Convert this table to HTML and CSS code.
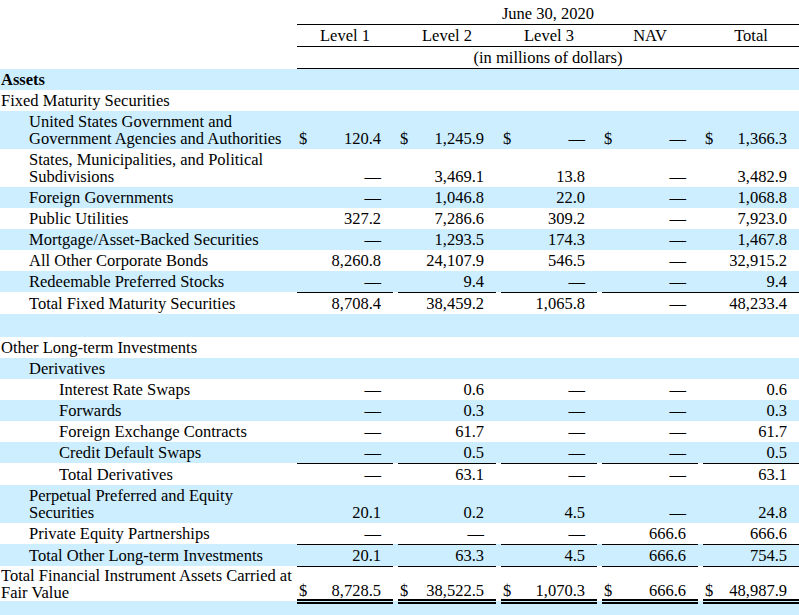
FILE: index.html
```html
<!DOCTYPE html>
<html>
<head>
<meta charset="utf-8">
<link rel="stylesheet" href="styles.css">
</head>
<body>
<table class="fv">
<colgroup>
<col class="c-lbl">
<col class="c-d"><col class="c-n">
<col class="c-g">
<col class="c-d"><col class="c-n2">
<col class="c-g">
<col class="c-d"><col class="c-n">
<col class="c-g">
<col class="c-d"><col class="c-n">
<col class="c-g">
<col class="c-d"><col class="c-n">
</colgroup>
<tr class="hdr"><td></td><td colspan="14" class="ctr u">June 30, 2020</td></tr>
<tr class="hdr"><td></td><td colspan="2" class="ctr u">Level 1</td><td class="u"></td><td colspan="2" class="ctr u">Level 2</td><td class="u"></td><td colspan="2" class="ctr u">Level 3</td><td class="u"></td><td colspan="2" class="ctr u">NAV</td><td class="u"></td><td colspan="2" class="ctr u">Total</td></tr>
<tr class="hdr"><td></td><td colspan="14" class="ctr u">(in millions of dollars)</td></tr>

<tr class="b"><td class="l0 bold">Assets</td><td colspan="14"></td></tr>
<tr><td class="l0">Fixed Maturity Securities</td><td colspan="14"></td></tr>
<tr class="b"><td class="l1">United States Government and Government Agencies and Authorities</td><td class="d">$</td><td class="n">120.4</td><td></td><td class="d">$</td><td class="n">1,245.9</td><td></td><td class="d">$</td><td class="n">—</td><td></td><td class="d">$</td><td class="n">—</td><td></td><td class="d">$</td><td class="n">1,366.3</td></tr>
<tr><td class="l1">States, Municipalities, and Political Subdivisions</td><td class="d"></td><td class="n">—</td><td></td><td class="d"></td><td class="n">3,469.1</td><td></td><td class="d"></td><td class="n">13.8</td><td></td><td class="d"></td><td class="n">—</td><td></td><td class="d"></td><td class="n">3,482.9</td></tr>
<tr class="b"><td class="l1">Foreign Governments</td><td class="d"></td><td class="n">—</td><td></td><td class="d"></td><td class="n">1,046.8</td><td></td><td class="d"></td><td class="n">22.0</td><td></td><td class="d"></td><td class="n">—</td><td></td><td class="d"></td><td class="n">1,068.8</td></tr>
<tr><td class="l1">Public Utilities</td><td class="d"></td><td class="n">327.2</td><td></td><td class="d"></td><td class="n">7,286.6</td><td></td><td class="d"></td><td class="n">309.2</td><td></td><td class="d"></td><td class="n">—</td><td></td><td class="d"></td><td class="n">7,923.0</td></tr>
<tr class="b"><td class="l1">Mortgage/Asset-Backed Securities</td><td class="d"></td><td class="n">—</td><td></td><td class="d"></td><td class="n">1,293.5</td><td></td><td class="d"></td><td class="n">174.3</td><td></td><td class="d"></td><td class="n">—</td><td></td><td class="d"></td><td class="n">1,467.8</td></tr>
<tr><td class="l1">All Other Corporate Bonds</td><td class="d"></td><td class="n">8,260.8</td><td></td><td class="d"></td><td class="n">24,107.9</td><td></td><td class="d"></td><td class="n">546.5</td><td></td><td class="d"></td><td class="n">—</td><td></td><td class="d"></td><td class="n">32,915.2</td></tr>
<tr class="b"><td class="l1">Redeemable Preferred Stocks</td><td class="d u"></td><td class="n u">—</td><td></td><td class="d u"></td><td class="n u">9.4</td><td></td><td class="d u"></td><td class="n u">—</td><td></td><td class="d u"></td><td class="n u">—</td><td class="u"></td><td class="d u"></td><td class="n u">9.4</td></tr>
<tr><td class="l1">Total Fixed Maturity Securities</td><td class="d"></td><td class="n">8,708.4</td><td></td><td class="d"></td><td class="n">38,459.2</td><td></td><td class="d"></td><td class="n">1,065.8</td><td></td><td class="d"></td><td class="n">—</td><td></td><td class="d"></td><td class="n">48,233.4</td></tr>
<tr class="b blank"><td></td><td colspan="14"></td></tr>
<tr><td class="l0">Other Long-term Investments</td><td colspan="14"></td></tr>
<tr class="b"><td class="l1">Derivatives</td><td colspan="14"></td></tr>
<tr><td class="l2">Interest Rate Swaps</td><td class="d"></td><td class="n">—</td><td></td><td class="d"></td><td class="n">0.6</td><td></td><td class="d"></td><td class="n">—</td><td></td><td class="d"></td><td class="n">—</td><td></td><td class="d"></td><td class="n">0.6</td></tr>
<tr class="b"><td class="l2">Forwards</td><td class="d"></td><td class="n">—</td><td></td><td class="d"></td><td class="n">0.3</td><td></td><td class="d"></td><td class="n">—</td><td></td><td class="d"></td><td class="n">—</td><td></td><td class="d"></td><td class="n">0.3</td></tr>
<tr><td class="l2">Foreign Exchange Contracts</td><td class="d"></td><td class="n">—</td><td></td><td class="d"></td><td class="n">61.7</td><td></td><td class="d"></td><td class="n">—</td><td></td><td class="d"></td><td class="n">—</td><td></td><td class="d"></td><td class="n">61.7</td></tr>
<tr class="b"><td class="l2">Credit Default Swaps</td><td class="d u"></td><td class="n u">—</td><td></td><td class="d u"></td><td class="n u">0.5</td><td></td><td class="d u"></td><td class="n u">—</td><td></td><td class="d u"></td><td class="n u">—</td><td></td><td class="d u"></td><td class="n u">0.5</td></tr>
<tr><td class="l2">Total Derivatives</td><td class="d"></td><td class="n">—</td><td></td><td class="d"></td><td class="n">63.1</td><td></td><td class="d"></td><td class="n">—</td><td></td><td class="d"></td><td class="n">—</td><td></td><td class="d"></td><td class="n">63.1</td></tr>
<tr class="b"><td class="l1">Perpetual Preferred and Equity Securities</td><td class="d"></td><td class="n">20.1</td><td></td><td class="d"></td><td class="n">0.2</td><td></td><td class="d"></td><td class="n">4.5</td><td></td><td class="d"></td><td class="n">—</td><td></td><td class="d"></td><td class="n">24.8</td></tr>
<tr><td class="l1">Private Equity Partnerships</td><td class="d u"></td><td class="n u">—</td><td></td><td class="d u"></td><td class="n u">—</td><td></td><td class="d u"></td><td class="n u">—</td><td></td><td class="d u"></td><td class="n u">666.6</td><td></td><td class="d u"></td><td class="n u">666.6</td></tr>
<tr class="b"><td class="l1">Total Other Long-term Investments</td><td class="d u"></td><td class="n u">20.1</td><td></td><td class="d u"></td><td class="n u">63.3</td><td></td><td class="d u"></td><td class="n u">4.5</td><td></td><td class="d u"></td><td class="n u">666.6</td><td></td><td class="d u"></td><td class="n u">754.5</td></tr>
<tr class="tot"><td class="l0">Total Financial Instrument Assets Carried at Fair Value</td><td class="d uu">$</td><td class="n uu">8,728.5</td><td></td><td class="d uu">$</td><td class="n uu">38,522.5</td><td></td><td class="d uu">$</td><td class="n uu">1,070.3</td><td></td><td class="d uu">$</td><td class="n uu">666.6</td><td></td><td class="d uu">$</td><td class="n uu">48,987.9</td></tr>
<tr class="b blank"><td></td><td colspan="14"></td></tr>
</table>
</body>
</html>
```

FILE: styles.css
```css
html, body {
  margin: 0;
  padding: 0;
  background: #ffffff;
}
body {
  font-family: "Liberation Serif", "Times New Roman", serif;
  font-size: 16.5px;
  line-height: 17px;
  color: #000000;
}
.fv {
  width: 799px;
  margin-top: 3px;
  border-collapse: collapse;
  table-layout: fixed;
}
.c-lbl { width: 297px; }
.c-d { width: 16px; }
.c-n { width: 80px; }
.c-n2 { width: 82px; }
.c-g { width: 5px; }
.fv td {
  padding: 2px 0;
  vertical-align: bottom;
}
.fv tr.b td {
  background: #cceeff;
}
.fv tr.tot td {
  padding-top: 1px;
  padding-bottom: 0;
}
.ctr { text-align: center; }
.bold { font-weight: bold; }
.fv td.l0 { padding-left: 1px; }
.fv td.l1 { padding-left: 29px; }
.fv td.l2 { padding-left: 59px; }
.fv td.d {
  padding-left: 2px;
  white-space: nowrap;
}
.fv td.n {
  text-align: right;
  padding-right: 12px;
  white-space: nowrap;
}
.u { border-bottom: 1px solid #000000; }
.uu { border-bottom: 5px double #000000; }
.blank td { height: 19px; }
```
